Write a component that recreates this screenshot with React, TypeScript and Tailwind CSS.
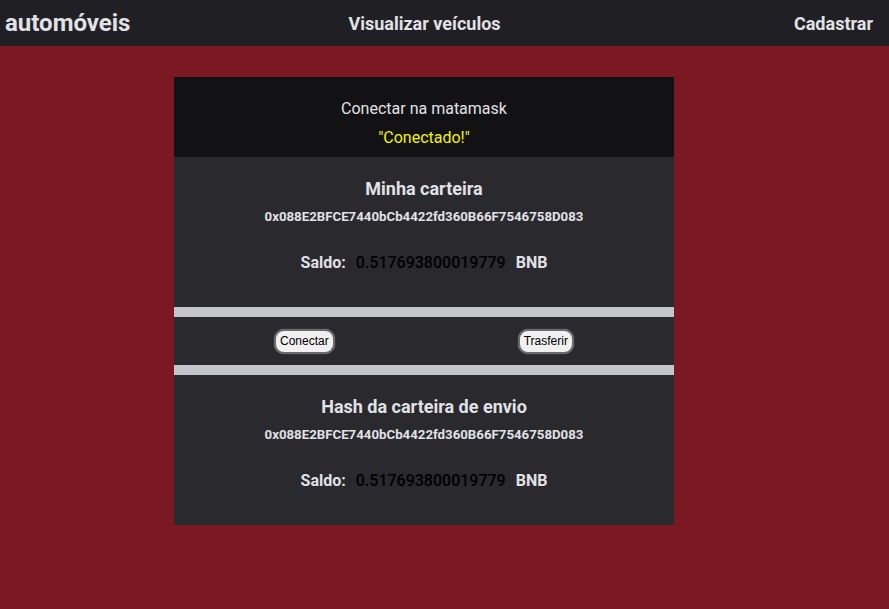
const ENDERECO = '0x088E2BFCE7440bCb4422fd360B66F7546758D083'
const SALDO = '0.517693800019779'

function Carteira({ titulo }: { titulo: string }) {
  return (
    <div className="flex h-[150px] flex-col items-center bg-[#29292e] pt-[20px] text-[#e1e1e6]">
      <h2 className="text-[18px] font-bold leading-[24px]">{titulo}</h2>
      <p className="mt-[8px] text-[13.25px] font-bold leading-[16px]">{ENDERECO}</p>
      <div className="mt-[27px] flex items-center gap-[10px] text-[16px] font-bold leading-[22px]">
        <span>Saldo:</span>
        <span className="font-medium text-black">{SALDO}</span>
        <span>BNB</span>
      </div>
    </div>
  )
}

function Botao({ children }: { children: string }) {
  return (
    <button className="h-[25px] rounded-[10px] border-2 border-[#6b6b6b] bg-[#f0f0f0] px-[4px] font-['Liberation_Sans',sans-serif] text-[12px] text-black shadow-[0_0_1px_#999]">
      {children}
    </button>
  )
}

export default function App() {
  return (
    <div className="min-h-[609px] bg-[#7a1921] font-['Roboto',sans-serif]">
      <nav className="flex h-[46px] items-center bg-[#202024] pr-[16px] pl-[5px] text-[#e1e1e6]">
        <span className="text-[24px] font-bold">automóveis</span>
        <span className="ml-[218px] text-[18px] font-bold">Visualizar veículos</span>
        <span className="ml-auto text-[18px] font-bold">Cadastrar</span>
      </nav>

      <main className="mt-[31px] ml-[174px] w-[500px]">
        <div className="flex h-[80px] flex-col items-center bg-[#121214] pt-[21px] text-[16px] leading-[22px]">
          <p className="text-[#e1e1e6]">Conectar na matamask</p>
          <p className="mt-[7px] text-[#f2f20a]">"Conectado!"</p>
        </div>

        <Carteira titulo="Minha carteira" />

        <div className="h-[10px] bg-[#c4c4cc]" />
        <div className="flex h-[48px] items-center justify-center gap-[183px] bg-[#29292e]">
          <Botao>Conectar</Botao>
          <Botao>Trasferir</Botao>
        </div>
        <div className="h-[10px] bg-[#c4c4cc]" />

        <Carteira titulo="Hash da carteira de envio" />
      </main>
    </div>
  )
}
